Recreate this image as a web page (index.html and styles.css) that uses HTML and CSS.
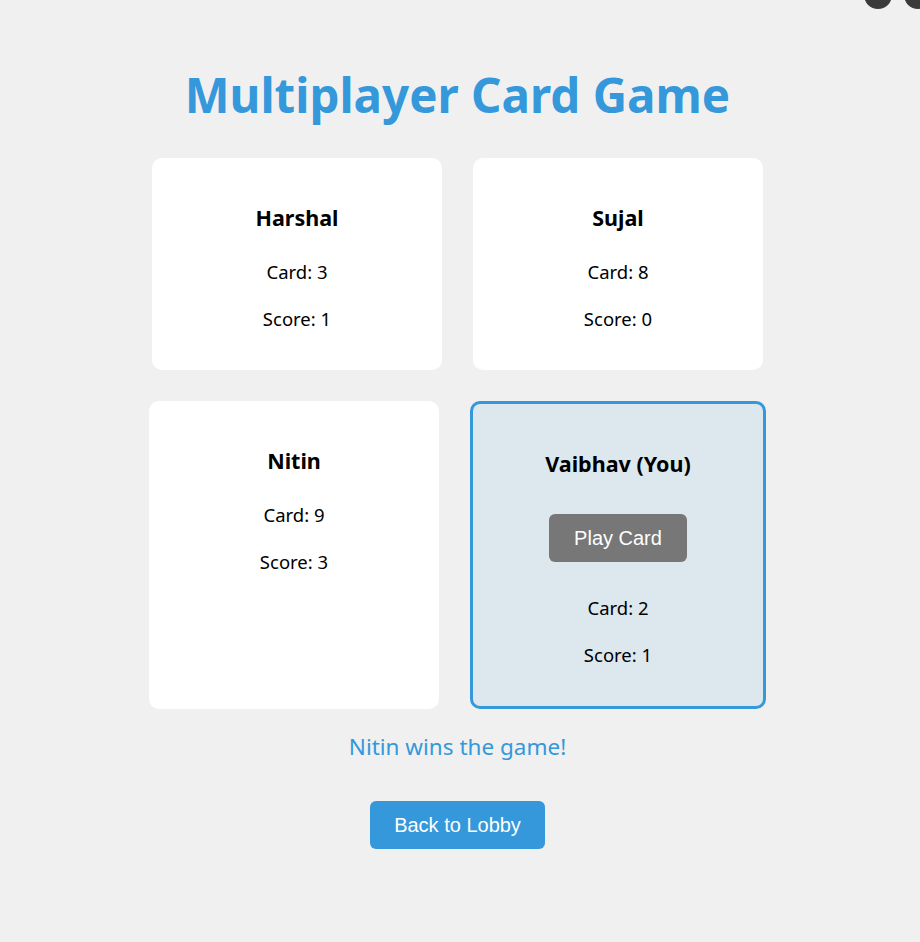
FILE: index.html
```html
<!DOCTYPE html>
<html lang="en">
<head>
<meta charset="utf-8">
<title>Multiplayer Card Game</title>
<link rel="stylesheet" href="styles.css">
</head>
<body>
<div class="overlay-dots">
  <span class="dot"></span>
  <span class="dot"></span>
</div>
<main class="app">
  <h1 class="title">Multiplayer Card Game</h1>
  <section class="players">
    <div class="card">
      <h3 class="name">Harshal</h3>
      <p class="stat">Card: 3</p>
      <p class="stat">Score: 1</p>
    </div>
    <div class="card">
      <h3 class="name">Sujal</h3>
      <p class="stat">Card: 8</p>
      <p class="stat">Score: 0</p>
    </div>
    <div class="card">
      <h3 class="name">Nitin</h3>
      <p class="stat">Card: 9</p>
      <p class="stat">Score: 3</p>
    </div>
    <div class="card card-self">
      <h3 class="name">Vaibhav (You)</h3>
      <button class="btn btn-play" disabled>Play Card</button>
      <p class="stat">Card: 2</p>
      <p class="stat">Score: 1</p>
    </div>
  </section>
  <p class="winner">Nitin wins the game!</p>
  <button class="btn btn-lobby">Back to Lobby</button>
</main>
</body>
</html>
```

FILE: styles.css
```css
html, body {
  margin: 0;
  padding: 0;
  background: #f0f0f0;
}

body {
  font-family: "Noto Sans", "Open Sans", sans-serif;
  color: #000;
}

.app {
  padding: 0 5px 0 0;
  display: flex;
  flex-direction: column;
  align-items: center;
}

.title {
  margin: 55px 0 0;
  font-size: 47.5px;
  line-height: 80px;
  font-weight: 700;
  color: #3498db;
}

.players {
  margin-top: 23px;
  width: 640px;
  display: flex;
  flex-wrap: wrap;
  justify-content: center;
  gap: 31px 31px;
}

.card {
  width: 250px;
  padding: 22px 20px 17px;
  background: #fff;
  border-radius: 10px;
  display: flex;
  flex-direction: column;
  align-items: center;
}

.card-self {
  background: #dde7ee;
  border: 3px solid #3498db;
}

.name {
  margin: 23px 0 26px;
  font-size: 21.5px;
  line-height: 30px;
  font-weight: 700;
}

.stat {
  margin: 0 0 22px;
  font-size: 18.5px;
  line-height: 25px;
}

.btn {
  font-family: "Liberation Sans", Arial, sans-serif;
  font-size: 20px;
  line-height: 24px;
  padding: 12px 25px;
  border: none;
  border-radius: 6px;
  color: #fff;
}

.btn-play {
  background: #777;
  margin: 9px 0 33px;
}

.btn-lobby {
  background: #3498db;
  padding: 12px 24px;
  cursor: pointer;
}

.winner {
  margin: 23px 0 39px;
  font-size: 22.5px;
  line-height: 30px;
  color: #3498db;
}

.overlay-dots {
  position: fixed;
  top: -19px;
  right: -12px;
  display: flex;
  gap: 12px;
}

.dot {
  width: 28px;
  height: 28px;
  border-radius: 50%;
  background: #3b3b3b;
}
```
